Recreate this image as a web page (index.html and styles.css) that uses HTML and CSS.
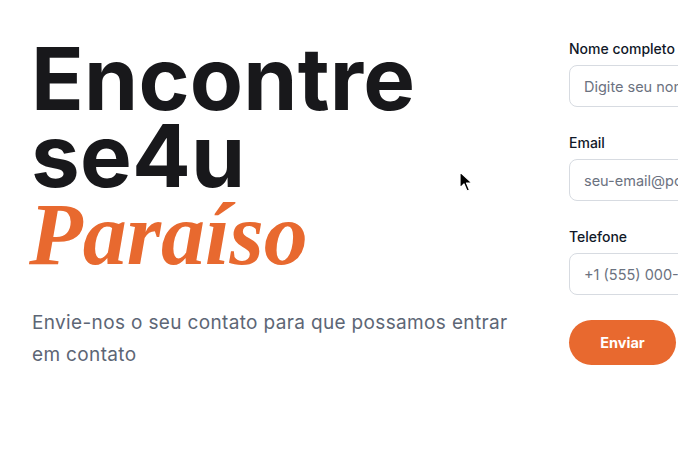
FILE: index.html
```html
<!DOCTYPE html>
<html lang="pt-BR">
<head>
<meta charset="utf-8">
<title>Contato</title>
<link rel="stylesheet" href="styles.css">
</head>
<body>
<main class="page">
  <section class="intro">
    <h1 class="title">Encontre<br>se4u<span class="accent">Paraíso</span></h1>
    <p class="lead">Envie-nos o seu contato para que possamos entrar em contato</p>
  </section>
  <form class="form">
    <div class="field">
      <label class="label" for="nome">Nome completo</label>
      <input class="input" id="nome" type="text" placeholder="Digite seu nome">
    </div>
    <div class="field">
      <label class="label" for="email">Email</label>
      <input class="input" id="email" type="email" placeholder="seu-email@post.com">
    </div>
    <div class="field">
      <label class="label" for="tel">Telefone</label>
      <input class="input" id="tel" type="tel" placeholder="+1 (555) 000-0000">
    </div>
    <button class="submit" type="button">Enviar</button>
  </form>
</main>
<svg class="cursor" width="14" height="22" viewBox="0 0 14 22" aria-hidden="true">
  <path d="M1 1 L1 17 L5 13 L8 20 L10.5 19 L7.5 12 L13 12 Z" fill="#000" stroke="#fff" stroke-width="1.2" stroke-linejoin="round"/>
</svg>
</body>
</html>
```
FILE: styles.css
```css
html, body {
  margin: 0;
  padding: 0;
  background: #ffffff;
  overflow: hidden;
}

body {
  font-family: Inter, "Noto Sans", sans-serif;
  width: 678px;
  height: 458px;
  position: relative;
}

.page {
  display: flex;
  align-items: flex-start;
  padding: 39px 0 0 31px;
}

.intro {
  flex: 0 0 491px;
}

.title {
  margin: 1px 0 0;
  font-family: Inter, sans-serif;
  font-weight: 700;
  font-size: 87px;
  line-height: 77px;
  letter-spacing: 0.2px;
  color: #18181b;
}

.accent {
  display: block;
  margin-left: -2px;
  font-family: "Liberation Serif", "DejaVu Serif", serif;
  font-style: italic;
  font-weight: 700;
  font-size: 88px;
  line-height: 82px;
  letter-spacing: 0;
  color: #e8692f;
}

.lead {
  margin: 31px 0 0 1px;
  font-size: 19px;
  line-height: 31.5px;
  letter-spacing: 0.35px;
  color: #5d6675;
}

.form {
  flex: 0 0 320px;
  margin-left: 47px;
  display: flex;
  flex-direction: column;
  align-items: flex-start;
  gap: 26px;
}

.field {
  display: flex;
  flex-direction: column;
  gap: 6px;
  width: 100%;
}

.label {
  font-size: 14px;
  line-height: 20px;
  font-weight: 500;
  color: #101828;
}

.input {
  box-sizing: border-box;
  width: 100%;
  height: 42px;
  padding: 0 14px;
  border: 1px solid #d7dbe1;
  border-radius: 8px;
  font-family: Inter, sans-serif;
  font-size: 14.5px;
  color: #101828;
  background: #fff;
  outline: none;
}

.input::placeholder {
  color: #6b7280;
}

.submit {
  margin-top: -1px;
  width: 107px;
  height: 45px;
  border: none;
  border-radius: 999px;
  background: #e8692f;
  color: #ffffff;
  font-family: Inter, sans-serif;
  font-weight: 700;
  font-size: 14.5px;
  cursor: pointer;
}

.cursor {
  position: absolute;
  left: 459px;
  top: 171px;
}
```
